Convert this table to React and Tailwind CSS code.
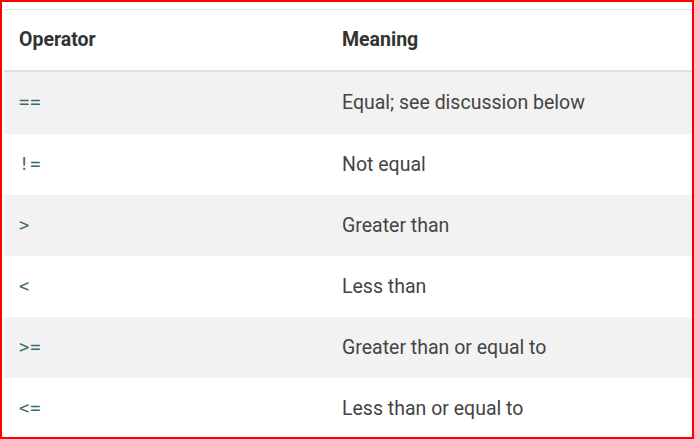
import React from 'react';

const rows = [
    ['==', 'Equal; see discussion below', 'h-[62px]'],
    ['!=', 'Not equal', 'h-[61px]'],
    ['>', 'Greater than', 'h-[61px]'],
    ['<', 'Less than', 'h-[61px]'],
    ['>=', 'Greater than or equal to', 'h-[61px]'],
    ['<=', 'Less than or equal to', 'h-[61px]'],
];

const App = () => {
    return (
        <div className="w-[694px] h-[439px] border-2 border-[#ff0000] bg-white overflow-hidden pl-[2px] pt-[7px] font-['Roboto',sans-serif]">
            <div className="w-[690px] border-t border-[#dee2e6]">
                <div className="flex items-center h-[62px] border-b-2 border-[#dee2e6] text-[19.5px] font-bold text-[#333]">
                    <div className="w-[323px] pl-[15px]">Operator</div>
                    <div className="flex-1 pl-[15px]">Meaning</div>
                </div>
                {rows.map(([op, meaning, h], i) => (
                    <div key={op} className={`flex items-center ${h} ${i % 2 === 0 ? 'bg-[#f2f2f2]' : 'bg-white'}`}>
                        <div className="w-[323px] pl-[15px] font-['DejaVu_Sans_Mono',monospace] text-[17px] tracking-[1px] text-[#3f6470]">{op}</div>
                        <div className="flex-1 pl-[15px] text-[19.5px] text-[#444]">{meaning}</div>
                    </div>
                ))}
            </div>
        </div>
    );
};

export default App;
